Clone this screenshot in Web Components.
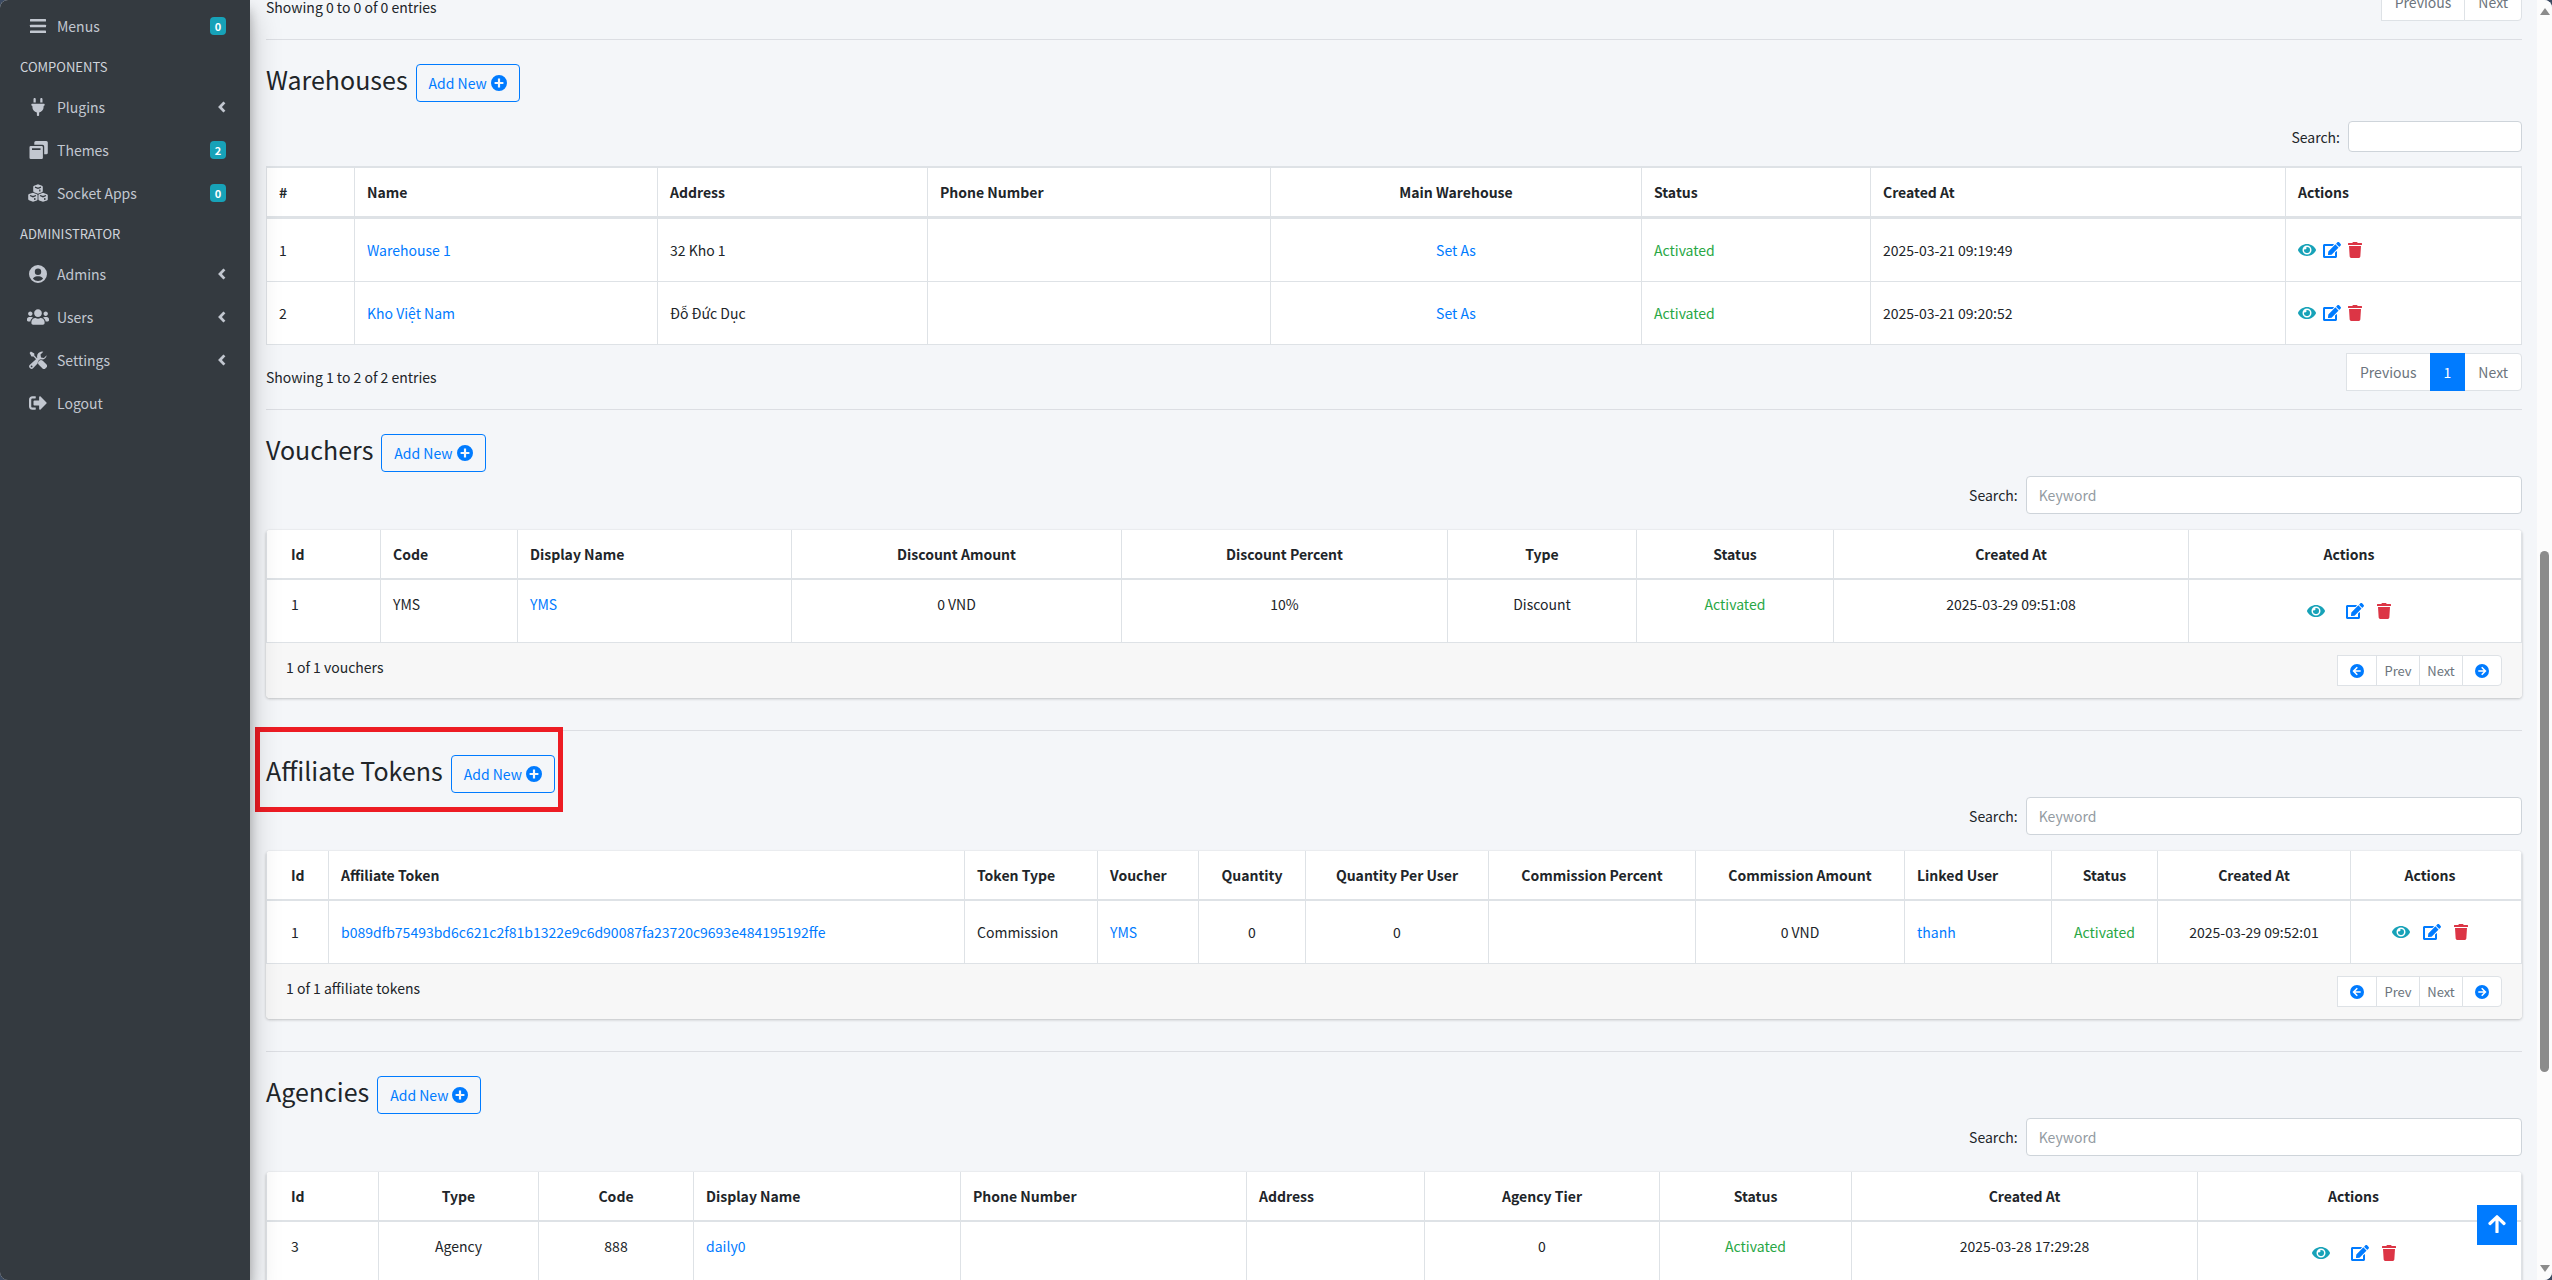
<!DOCTYPE html>
<html lang="en">
<head>
<meta charset="utf-8">
<title>Admin</title>
<style>
html{background:#3b4a61}
body{margin:0;font-family:"Noto Sans CJK SC","Noto Sans",sans-serif;font-size:14px;line-height:24px;color:#212529}
</style>
</head>
<body>
<admin-app></admin-app>
<script>
const ICONS = {
  bars: ['0 0 18 16', '<rect x="1" y="1" width="16" height="2.6" rx=".6"/><rect x="1" y="6.7" width="16" height="2.6" rx=".6"/><rect x="1" y="12.4" width="16" height="2.6" rx=".6"/>'],
  plug: ['0 0 384 512', '<path d="M96 0C78 0 64 14 64 32v96h64V32c0-18-14-32-32-32zM288 0c-18 0-32 14-32 32v96h64V32c0-18-14-32-32-32zM32 160c-18 0-32 14-32 32s14 32 32 32v32c0 77 55 142 128 157v67c0 18 14 32 32 32s32-14 32-32v-67c73-15 128-80 128-157v-32c18 0 32-14 32-32s-14-32-32-32z"/>'],
  themes: ['0 0 19 18', '<path fill-rule="evenodd" d="M1.800 5H12.600a1.300 1.300 0 0 1 1.300 1.300V16.700a1.300 1.300 0 0 1-1.300 1.300H1.800A1.300 1.300 0 0 1 .5 16.700V6.300A1.300 1.300 0 0 1 1.800 5zM3 7.300V9h8.500V7.300z"/><path d="M5.300 3.700V1.500A1.500 1.500 0 0 1 6.800 0H17.300A1.500 1.500 0 0 1 18.800 1.500V11.700A1.500 1.500 0 0 1 17.300 13.200H15.200V5.500A1.800 1.800 0 0 0 13.400 3.700z"/>'],
  cubes: ['0 0 20 18', '<path d="M10 .3l4 1.500q.8.400.8 1.200v4q0 .8-.8 1.200l-4 1.500-4-1.500q-.8-.4-.8-1.200V3q0-.8.800-1.200zM5 8.700l4 1.500q.6.300.6 1v4q0 .8-.8 1.200L5 17.800l-4-1.500q-.8-.4-.8-1.200v-4q0-.7.800-1zM15 8.700l4 1.500q.8.300.8 1v4q0 .8-.8 1.200l-4 1.400-3.800-1.400q-.8-.4-.8-1.200v-4q0-.7.600-1z"/><g fill="none" stroke="#343a40" stroke-width="1.300"><path d="M7 3.200l3 1.200 3-1.200M2 11.500l3 1.200 3-1.200M12 11.500l3 1.200 3-1.200M11.800 7.500V5.500M6.800 16v-2M16.800 16v-2"/></g>'],
  user: ['0 0 18 18', '<path fill-rule="evenodd" d="M9 0a9 9 0 1 0 0 18A9 9 0 0 0 9 0zm0 3.500a3.200 3.200 0 1 1 0 6.400 3.200 3.200 0 0 1 0-6.400zM3.900 13.700c.8-1.600 2.400-2.500 4-2.500h2.200c1.600 0 3.200.9 4 2.500A7 7 0 0 1 9 15.900a7 7 0 0 1-5.100-2.200z"/>'],
  users: ['0 0 640 512', '<path d="M96 224c35 0 64-29 64-64s-29-64-64-64-64 29-64 64 29 64 64 64zm448 0c35 0 64-29 64-64s-29-64-64-64-64 29-64 64 29 64 64 64zm32 32h-64c-18 0-34 7-45 19 40 22 69 62 75 109h66c18 0 32-14 32-32v-32c0-35-29-64-64-64zm-256 0c62 0 112-50 112-112S382 32 320 32 208 82 208 144s50 112 112 112zm77 32h-8c-21 10-44 16-69 16s-48-6-69-16h-8c-64 0-115 52-115 115v29c0 26 21 48 48 48h288c27 0 48-22 48-48v-29c0-63-51-115-115-115zm-224-13c-11-12-27-19-45-19H64c-35 0-64 29-64 64v32c0 18 14 32 32 32h66c6-47 35-87 75-109z"/>'],
  tools: ['0 0 18 18', '<path d="M.6 1.900L1.900.6 5.300 2.600v2L9.500 8.700l-1 1L4.500 5.500h-2z"/><path d="M10.500 9.500q1.700-1 3.300.3L17.300 13.300a2.300 2.300 0 0 1 0 3.300l-.7.700a2.300 2.300 0 0 1-3.300 0L9.800 13.800q-1.300-1.400-.4-3.200z"/><path fill-rule="evenodd" d="M17.700 4.200L14.900 7l-2.900-.6-.5-2.900L14.300.7a5 5 0 0 0-6 6.300L.9 13.700a2.400 2.400 0 1 0 3.400 3.400l4.500-4.800q-.3-2.500 1.600-3.600 1.200-.6 2.500-.3a5 5 0 0 0 4.800-4.200zM2.600 14.500a.9.900 0 1 1 0 1.800.9.900 0 0 1 0-1.800z"/>'],
  logout: ['0 0 512 512', '<path d="M497 273L329 441c-15 15-41 4.500-41-17v-96H152c-13.300 0-24-10.700-24-24v-96c0-13.300 10.700-24 24-24h136V88c0-21.400 25.900-32 41-17l168 168c9.300 9.400 9.300 24.600 0 34zM192 436v-40c0-6.600-5.400-12-12-12H96c-17.700 0-32-14.300-32-32V160c0-17.700 14.300-32 32-32h84c6.600 0 12-5.400 12-12V76c0-6.600-5.400-12-12-12H96c-53 0-96 43-96 96v192c0 53 43 96 96 96h84c6.600 0 12-5.400 12-12z"/>'],
  angle: ['0 0 8 12', '<path d="M6.400 1.400L2 6l4.400 4.600" fill="none" stroke="currentColor" stroke-width="2.800"/>'],
  plus: ['0 0 16 16', '<path fill-rule="evenodd" d="M8 0a8 8 0 1 0 0 16A8 8 0 0 0 8 0zM6.900 3.600h2.200v3.300h3.300v2.200H9.100v3.300H6.900V9.100H3.600V6.900h3.300z"/>'],
  left: ['0 0 14 14', '<circle cx="7" cy="7" r="7"/><path d="M7.300 3.300L3.600 7l3.700 3.700M3.800 7h6.900" fill="none" stroke="#fff" stroke-width="1.600"/>'],
  right: ['0 0 14 14', '<circle cx="7" cy="7" r="7"/><path d="M6.700 3.300L10.400 7l-3.700 3.700M10.200 7H3.300" fill="none" stroke="#fff" stroke-width="1.600"/>'],
  eye: ['0 0 576 512', '<path d="M572.500 241.400C518.300 135.600 410.900 64 288 64S57.700 135.600 3.500 241.400a32.400 32.400 0 0 0 0 29.200C57.700 376.400 165.100 448 288 448s230.300-71.600 284.500-177.400a32.400 32.400 0 0 0 0-29.200zM288 400a144 144 0 1 1 144-144 143.900 143.900 0 0 1-144 144zm0-240a95.300 95.300 0 0 0-25.300 3.800 47.900 47.900 0 0 1-66.900 66.900A95.800 95.800 0 1 0 288 160z"/>'],
  edit: ['0 0 576 512', '<path d="M402.600 83.200l90.200 90.200c3.800 3.800 3.800 10 0 13.800L274.400 405.600l-92.800 10.300c-12.400 1.400-22.900-9.100-21.500-21.500l10.300-92.800L388.800 83.200c3.800-3.800 10-3.800 13.800 0zm162-22.900l-48.800-48.800c-15.200-15.200-39.900-15.200-55.200 0l-35.400 35.400c-3.800 3.800-3.800 10 0 13.800l90.200 90.200c3.800 3.800 10 3.800 13.800 0l35.400-35.400c15.200-15.300 15.200-40 0-55.200zM384 346.200V448H64V128h229.800c3.200 0 6.200-1.300 8.500-3.500l40-40c7.600-7.600 2.200-20.500-8.500-20.500H48C21.500 64 0 85.500 0 112v352c0 26.500 21.500 48 48 48h352c26.500 0 48-21.500 48-48V306.200c0-10.700-12.900-16-20.500-8.500l-40 40c-2.200 2.300-3.500 5.300-3.500 8.500z"/>'],
  trash: ['0 0 448 512', '<path d="M432 32H312l-9.400-18.700A24 24 0 0 0 281.100 0H166.800a23.700 23.700 0 0 0-21.400 13.300L136 32H16A16 16 0 0 0 0 48v32a16 16 0 0 0 16 16h416a16 16 0 0 0 16-16V48a16 16 0 0 0-16-16zM53.200 467a48 48 0 0 0 47.900 45h245.800a48 48 0 0 0 47.900-45L416 128H32z"/>'],
  up: ['0 0 18 18', '<path d="M2 8.500L9 1.800l7 6.700M9 2.500V17" fill="none" stroke="#fff" stroke-width="3.200" stroke-linecap="round" stroke-linejoin="round"/>']
};

class UiIcon extends HTMLElement {
  connectedCallback() {
    const root = this.attachShadow({ mode: 'open' });
    const [box, body] = ICONS[this.getAttribute('name')];
    root.innerHTML = `<style>:host{display:inline-flex;flex:none}svg{display:block;width:var(--w,16px);height:var(--h,16px);fill:currentColor}</style><svg viewBox="${box}" aria-hidden="true">${body}</svg>`;
    const [w, h] = (this.getAttribute('size') || '16 16').split(' ');
    this.style.setProperty('--w', w + 'px');
    this.style.setProperty('--h', h + 'px');
  }
}
customElements.define('ui-icon', UiIcon);

class NavItem extends HTMLElement {
  connectedCallback() {
    const badge = this.getAttribute('badge');
    const tail = badge !== null ? `<span class="badge">${badge}</span>` : this.hasAttribute('tree') ? '<ui-icon name="angle" size="8 12"></ui-icon>' : '';
    this.attachShadow({ mode: 'open' }).innerHTML = `<style>
      :host{display:block}
      a{display:flex;align-items:center;height:40px;box-sizing:border-box;padding:0 16px 2px;color:#c2c7d0;text-decoration:none}
      .ico{display:flex;justify-content:center;width:28px;margin-right:5px}
      .label{flex:1}
      .badge{background:#17a2b8;color:#fff;font-weight:700;font-size:11px;line-height:18px;width:16px;height:18px;border-radius:4px;text-align:center}
    </style><a href="#"><span class="ico"><ui-icon name="${this.getAttribute('icon')}" size="${this.getAttribute('size')}"></ui-icon></span><span class="label"><slot></slot></span>${tail}</a>`;
  }
}
customElements.define('nav-item', NavItem);

class SideBar extends HTMLElement {
  connectedCallback() {
    this.attachShadow({ mode: 'open' }).innerHTML = `<style>
      :host{display:block;flex:none;box-sizing:border-box;width:250px;padding:7px 8px;background:#343a40;position:relative;z-index:2;box-shadow:0 14px 28px rgba(0,0,0,.25),0 10px 10px rgba(0,0,0,.22)}
      nav{display:flex;flex-direction:column;gap:3px}
      h2{margin:0;padding:6px 12px 7px;font-size:13px;line-height:22px;font-weight:400;color:#d0d4db;text-transform:uppercase}
    </style><nav aria-label="Main">
      <nav-item icon="bars" size="18 16" badge="0">Menus</nav-item>
      <h2>Components</h2>
      <nav-item icon="plug" size="14 18" tree>Plugins</nav-item>
      <nav-item icon="themes" size="19 18" badge="2">Themes</nav-item>
      <nav-item icon="cubes" size="20 18" badge="0">Socket Apps</nav-item>
      <h2>Administrator</h2>
      <nav-item icon="user" size="18 18" tree>Admins</nav-item>
      <nav-item icon="users" size="22 18" tree>Users</nav-item>
      <nav-item icon="tools" size="18 18" tree>Settings</nav-item>
      <nav-item icon="logout" size="18 18">Logout</nav-item>
    </nav>`;
  }
}
customElements.define('side-bar', SideBar);

class SectionHead extends HTMLElement {
  connectedCallback() {
    this.attachShadow({ mode: 'open' }).innerHTML = `<style>
      :host{display:block;border-top:1px solid #dcdee3;padding-top:24px}
      .row{display:inline-flex;align-items:flex-start;gap:8px;position:relative;height:38px;vertical-align:top}
      h3{margin:0;font-size:25px;line-height:30px;font-weight:400}
      button{display:flex;align-items:center;gap:4px;box-sizing:border-box;height:38px;padding:6px 12px;border:1px solid #007bff;border-radius:4px;background:transparent;color:#007bff;font:inherit}
      :host([marked]) .row::after{content:"";position:absolute;inset:-28px -8px -19px -11px;border:5px solid #ed1c24;pointer-events:none}
    </style><div class="row"><h3><slot></slot></h3><button type="button">Add New<ui-icon name="plus"></ui-icon></button></div>`;
  }
}
customElements.define('section-head', SectionHead);

class SearchField extends HTMLElement {
  connectedCallback() {
    this.attachShadow({ mode: 'open' }).innerHTML = `<style>
      :host{display:flex;justify-content:flex-end;align-items:center;gap:8px}
      input{box-sizing:border-box;width:22%;height:38px;padding:6px 12px;border:1px solid #ced4da;border-radius:4px;background:#fff;font:inherit;color:#495057}
      :host([small]) input{width:174px;height:31px}
      input::placeholder{color:#939ba2;opacity:1}
    </style><label for="q">Search:</label><input id="q" type="search" placeholder="${this.getAttribute('placeholder') || ''}">`;
  }
}
customElements.define('search-field', SearchField);

class PageNav extends HTMLElement {
  connectedCallback() {
    const small = this.hasAttribute('small');
    const items = small
      ? '<button class="a" aria-label="First"><ui-icon name="left" size="14 14"></ui-icon></button><button>Prev</button><button>Next</button><button class="a" aria-label="Last"><ui-icon name="right" size="14 14"></ui-icon></button>'
      : `<button>Previous</button>${this.hasAttribute('page') ? `<button class="on">${this.getAttribute('page')}</button>` : ''}<button>Next</button>`;
    this.attachShadow({ mode: 'open' }).innerHTML = `<style>
      :host{display:flex}
      button{display:flex;align-items:center;justify-content:center;box-sizing:border-box;height:38px;padding:0 13px;border:1px solid #dee2e6;margin-left:-1px;background:#fff;color:#6c757d;font:inherit}
      button:first-child{border-radius:4px 0 0 4px;margin-left:0}
      button:last-child{border-radius:0 4px 4px 0}
      .on{background:#007bff;border-color:#007bff;color:#fff;z-index:1}
      :host([small]) button{height:31px;padding:0 7px;font-size:13px;min-width:44px}
      :host([small]) .a{color:#007bff;min-width:40px}
    </style>${items}`;
  }
}
customElements.define('page-nav', PageNav);

const TABLES = {
  warehouses: {
    cols: [[88,'#'],[303,'Name'],[270,'Address'],[343,'Phone Number'],[371,'Main Warehouse','c'],[229,'Status'],[415,'Created At'],[236,'Actions']],
    rows: [
      ['1','@Warehouse 1','32 Kho 1','','@Set As','+Activated','2025-03-21 09:19:49','!'],
      ['2','@Kho Việt Nam','Đỗ Đức Dục','','@Set As','+Activated','2025-03-21 09:20:52','!']
    ]
  },
  vouchers: {
    cols: [[114,'Id'],[137,'Code'],[274,'Display Name'],[330,'Discount Amount','c'],[326,'Discount Percent','c'],[189,'Type','c'],[197,'Status','c'],[355,'Created At','c'],[333,'Actions','c']],
    rows: [['1','YMS','@YMS','0 VND','10%','Discount','+Activated','2025-03-29 09:51:08','!']]
  },
  tokens: {
    cols: [[62,'Id'],[636,'Affiliate Token'],[133,'Token Type'],[101,'Voucher'],[107,'Quantity','c'],[183,'Quantity Per User','c'],[207,'Commission Percent','c'],[209,'Commission Amount','c'],[147,'Linked User'],[106,'Status','c'],[193,'Created At','c'],[171,'Actions','c']],
    rows: [['1','@b089dfb75493bd6c621c2f81b1322e9c6d90087fa23720c9693e484195192ffe','Commission','@YMS','0','0','','0 VND','@thanh','+Activated','2025-03-29 09:52:01','!']]
  },
  agencies: {
    cols: [[112,'Id'],[160,'Type','c'],[155,'Code','c'],[267,'Display Name'],[286,'Phone Number'],[178,'Address'],[235,'Agency Tier','c'],[192,'Status','c'],[346,'Created At','c'],[324,'Actions','c']],
    rows: [['3','Agency','888','@daily0','','','0','+Activated','2025-03-28 17:29:28','!']]
  }
};

class DataTable extends HTMLElement {
  cell(v) {
    if (v[0] === '@') return `<a href="#">${v.slice(1)}</a>`;
    if (v[0] === '+') return `<span class="ok">${v.slice(1)}</span>`;
    if (v === '!') return `<div class="acts"><a href="#" class="view" aria-label="View"><ui-icon name="eye" size="18 16"></ui-icon></a><a href="#" class="edit" aria-label="Edit"><ui-icon name="edit" size="18 16"></ui-icon></a><a href="#" class="del" aria-label="Delete"><ui-icon name="trash" size="14 16"></ui-icon></a></div>`;
    return v;
  }
  connectedCallback() {
    const { cols, rows } = TABLES[this.getAttribute('source')];
    const total = cols.reduce((s, c) => s + c[0], 0);
    this.attachShadow({ mode: 'open' }).innerHTML = `<style>
      :host{display:block}
      table{width:100%;table-layout:fixed;border-collapse:separate;border-spacing:0;background:#fff;border-left:1px solid #dee2e6;box-sizing:border-box}
      th,td{box-sizing:border-box;padding:0 12px;border-right:1px solid #dee2e6;border-bottom:1px solid #dee2e6;text-align:left;white-space:nowrap}
      th{height:50px;font-weight:700;border-bottom-width:2px}
      td{height:63px}
      .c{text-align:center}
      a{color:#007bff;text-decoration:none}
      .ok{color:#28a745}
      .acts{display:flex;gap:7px}
      .acts a{display:flex}
      .acts .view{color:#17a2b8}
      .acts .del{color:#dc3545}
      :host([plain]) table{border-top:2px solid #dee2e6}
      :host([plain]) th{height:51px;border-bottom-width:3px}
      :host([card]) th:first-child,:host([card]) td:first-child{padding-left:24px}
      :host([card]) th:last-child,:host([card]) td:last-child{padding-right:24px}
      :host([card]) .acts{gap:13px;justify-content:center}
      :host([top]) td{vertical-align:top;padding-top:12px}
      :host([top]) .acts{margin-top:11px}
      :host([top]) .view{margin-right:8px}
    </style><table><colgroup>${cols.map(c => `<col style="width:${c[0] / total * 100}%">`).join('')}</colgroup>
    <thead><tr>${cols.map(c => `<th scope="col" class="${c[2] || ''}">${c[1]}</th>`).join('')}</tr></thead>
    <tbody>${rows.map(r => `<tr>${r.map((v, i) => `<td class="${cols[i][2] || ''}">${this.cell(v)}</td>`).join('')}</tr>`).join('')}</tbody></table>`;
  }
}
customElements.define('data-table', DataTable);

class TableCard extends HTMLElement {
  connectedCallback() {
    const note = this.getAttribute('note');
    this.attachShadow({ mode: 'open' }).innerHTML = `<style>
      :host{display:block;background:#fff;border-radius:4px;overflow:hidden;box-shadow:0 0 1px rgba(0,0,0,.125),0 1px 3px rgba(0,0,0,.2);margin:16px 0 32px}
      footer{display:flex;justify-content:space-between;align-items:flex-start;padding:12px 20px;background:#f7f7f7}
    </style><slot></slot>${note ? `<footer><span>${note}</span><page-nav small></page-nav></footer>` : ''}`;
  }
}
customElements.define('table-card', TableCard);

class BackToTop extends HTMLElement {
  connectedCallback() {
    this.attachShadow({ mode: 'open' }).innerHTML = `<style>
      :host{position:fixed;right:35px;bottom:35px;z-index:3}
      button{display:flex;align-items:flex-start;justify-content:center;width:40px;height:40px;padding:10px 0 0;border:0;background:#007bff}
    </style><button type="button" aria-label="Back to top"><ui-icon name="up" size="18 18"></ui-icon></button>`;
  }
}
customElements.define('back-to-top', BackToTop);

class ScrollRail extends HTMLElement {
  connectedCallback() {
    this.attachShadow({ mode: 'open' }).innerHTML = `<style>
      :host{display:flex;flex:none;flex-direction:column;align-items:center;box-sizing:border-box;width:15px;padding:8px 0;background:#fcfcfc}
      i{width:0;border:5px solid transparent}
      .u{border-top:0;border-bottom:7px solid #8b8b8b}
      .d{border-bottom:0;border-top:7px solid #8b8b8b}
      .before{flex:536}
      .thumb{flex:521;width:9px;border-radius:5px;background:#8b8b8b}
      .after{flex:193}
    </style><i class="u"></i><span class="before"></span><span class="thumb"></span><span class="after"></span><i class="d"></i>`;
  }
}
customElements.define('scroll-rail', ScrollRail);

class AdminApp extends HTMLElement {
  connectedCallback() {
    this.attachShadow({ mode: 'open' }).innerHTML = `<style>
      :host{display:flex;height:100vh;overflow:hidden;border-radius:8px;background:#f4f6f9}
      main{flex:1;min-width:0;padding:0 15px 0 16px;overflow:hidden}
      .info{display:flex;justify-content:space-between;align-items:flex-start;padding-bottom:18px}
      .info span{padding-top:12px}
      .first{margin-top:-17px}
      .small{margin:19px 0 14px}
      .big{margin-top:4px}
      .wh{margin-bottom:8px}
    </style>
    <side-bar></side-bar>
    <main>
      <div class="info first"><span>Showing 0 to 0 of 0 entries</span><page-nav></page-nav></div>
      <section-head>Warehouses</section-head>
      <search-field small class="small"></search-field>
      <data-table plain source="warehouses" class="wh"></data-table>
      <div class="info"><span>Showing 1 to 2 of 2 entries</span><page-nav page="1"></page-nav></div>
      <section-head>Vouchers</section-head>
      <search-field class="big" placeholder="Keyword"></search-field>
      <table-card note="1 of 1 vouchers"><data-table card top source="vouchers"></data-table></table-card>
      <section-head marked>Affiliate Tokens</section-head>
      <search-field class="big" placeholder="Keyword"></search-field>
      <table-card note="1 of 1 affiliate tokens"><data-table card source="tokens"></data-table></table-card>
      <section-head>Agencies</section-head>
      <search-field class="big" placeholder="Keyword"></search-field>
      <table-card><data-table card top source="agencies"></data-table></table-card>
    </main>
    <scroll-rail></scroll-rail>
    <back-to-top></back-to-top>`;
  }
}
customElements.define('admin-app', AdminApp);
</script>
</body>
</html>
